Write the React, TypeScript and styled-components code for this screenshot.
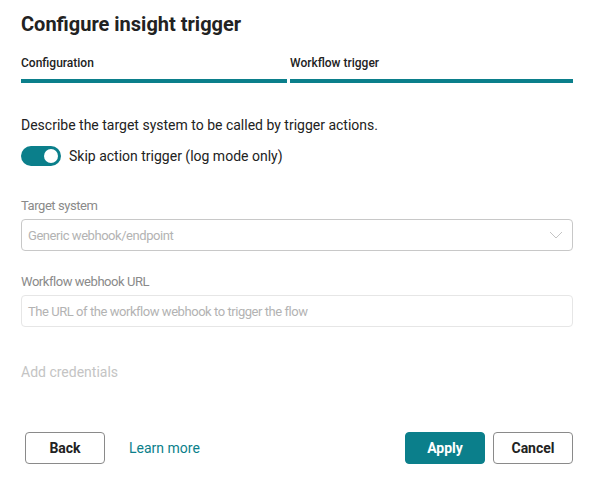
import React, { useState } from "react";
import styled, { createGlobalStyle } from "styled-components";

const GlobalStyle = createGlobalStyle`
  html, body {
    margin: 0;
    padding: 0;
    background: #ffffff;
    font-family: Roboto, "Liberation Sans", Arial, sans-serif;
    color: #222;
  }
`;

const TEAL = "#0b7f8b";

const Dialog = styled.div`
  width: 593px;
  height: 484px;
  box-sizing: border-box;
  padding: 10px 20px 0 21px;
  display: flex;
  flex-direction: column;
`;

const Title = styled.h1`
  margin: 0;
  font-size: 20px;
  line-height: 28px;
  font-weight: 700;
  color: #222;
`;

const Tabs = styled.div`
  display: flex;
  gap: 3px;
  margin-top: 18px;
`;

const Tab = styled.div<{ grow: number }>`
  flex: ${(p) => p.grow};
  font-size: 12px;
  font-weight: 500;
  color: #222;
  line-height: 14px;
  padding-bottom: 9px;
  border-bottom: 4px solid ${TEAL};
`;

const Description = styled.p`
  margin: 33px 0 0;
  font-size: 14px;
  line-height: 18px;
  color: #222;
`;

const ToggleRow = styled.label`
  display: flex;
  align-items: center;
  gap: 8px;
  margin-top: 12px;
  font-size: 14px;
  color: #222;
  cursor: pointer;
`;

const Switch = styled.span<{ on: boolean }>`
  position: relative;
  width: 40px;
  height: 20px;
  border-radius: 10px;
  background: ${(p) => (p.on ? TEAL : "#bbb")};
  flex-shrink: 0;
  &::after {
    content: "";
    position: absolute;
    top: 3px;
    left: ${(p) => (p.on ? "23px" : "3px")};
    width: 14px;
    height: 14px;
    border-radius: 50%;
    background: #fff;
  }
`;

const Field = styled.div<{ top: number }>`
  display: flex;
  flex-direction: column;
  margin-top: ${(p) => p.top}px;
`;

const Label = styled.div`
  font-size: 13px;
  letter-spacing: -0.45px;
  line-height: 16px;
  color: #8a8a8a;
  margin-bottom: 5px;
`;

const Box = styled.div<{ light?: boolean }>`
  height: 32px;
  box-sizing: border-box;
  border: 1px solid ${(p) => (p.light ? "#e6e6e6" : "#c8c8c8")};
  border-radius: 4px;
  display: flex;
  align-items: center;
  justify-content: space-between;
  padding: 0 9px 0 6px;
  font-size: 13px;
  letter-spacing: -0.45px;
  color: #b3b3b3;
`;

const Credentials = styled.div`
  margin-top: 37px;
  font-size: 14px;
  color: #c4c4c4;
`;

const Footer = styled.div`
  display: flex;
  align-items: center;
  margin-top: auto;
  margin-bottom: 20px;
  padding-left: 4px;
`;

const Button = styled.button<{ primary?: boolean }>`
  width: 80px;
  height: 32px;
  border-radius: 4px;
  font-family: inherit;
  font-size: 14px;
  font-weight: 700;
  cursor: pointer;
  border: 1px solid ${(p) => (p.primary ? TEAL : "#8a8a8a")};
  background: ${(p) => (p.primary ? TEAL : "#fff")};
  color: ${(p) => (p.primary ? "#fff" : "#222")};
`;

const LinkText = styled.a`
  margin-left: 24px;
  font-size: 14px;
  color: ${TEAL};
  text-decoration: none;
`;

const Spacer = styled.div`
  flex: 1;
`;

const RightButtons = styled.div`
  display: flex;
  gap: 8px;
`;

export default function App() {
  const [skip, setSkip] = useState(true);
  return (
    <Dialog>
      <GlobalStyle />
      <Title>Configure insight trigger</Title>
      <Tabs>
        <Tab grow={266}>Configuration</Tab>
        <Tab grow={283}>Workflow trigger</Tab>
      </Tabs>
      <Description>
        Describe the target system to be called by trigger actions.
      </Description>
      <ToggleRow onClick={() => setSkip(!skip)}>
        <Switch on={skip} />
        Skip action trigger (log mode only)
      </ToggleRow>
      <Field top={32}>
        <Label>Target system</Label>
        <Box>
          Generic webhook/endpoint
          <svg width="14" height="8" viewBox="0 0 14 8" fill="none">
            <path d="M1 1l6 6 6-6" stroke="#c4c4c4" strokeWidth="1" />
          </svg>
        </Box>
      </Field>
      <Field top={23}>
        <Label>Workflow webhook URL</Label>
        <Box light>The URL of the workflow webhook to trigger the flow</Box>
      </Field>
      <Credentials>Add credentials</Credentials>
      <Footer>
        <Button>Back</Button>
        <LinkText href="#">Learn more</LinkText>
        <Spacer />
        <RightButtons>
          <Button primary>Apply</Button>
          <Button>Cancel</Button>
        </RightButtons>
      </Footer>
    </Dialog>
  );
}
